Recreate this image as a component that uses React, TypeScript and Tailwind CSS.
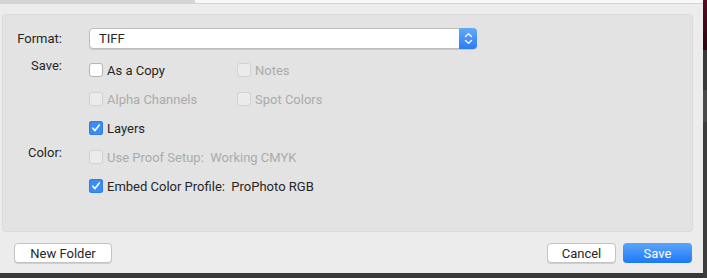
import React from 'react';

type Box = { label: string; checked?: boolean; disabled?: boolean };

function Check({ label, checked, disabled }: Box) {
  return (
    <label className={`flex items-center gap-[4px] whitespace-pre ${disabled ? 'text-[#ababab]' : 'text-[#262626]'}`}>
      {checked ? (
        <span className="flex h-[14px] w-[14px] items-center justify-center rounded-[3px] bg-[#3b8cf6] shadow-[inset_0_0_0_1px_#2f7fe8]">
          <svg width="10" height="10" viewBox="0 0 10 10" fill="none">
            <path d="M1.8 5.2 L4 7.6 L8.3 2" stroke="white" strokeWidth="1.6" strokeLinecap="round" strokeLinejoin="round" />
          </svg>
        </span>
      ) : (
        <span
          className={`h-[14px] w-[14px] rounded-[3px] border ${
            disabled ? 'border-[#d2d2d2] bg-[#ebebeb]' : 'border-[#b3b3b3] bg-white'
          }`}
        />
      )}
      <span>{label}</span>
    </label>
  );
}

export default function App() {
  return (
    <div
      className="flex h-[278px] w-[707px] bg-[#383838] text-[13px] leading-none"
      style={{ fontFamily: 'Roboto, "Liberation Sans", sans-serif' }}
    >
      <div className="flex h-[273px] w-[703px] flex-col bg-[#ececec]">
        {/* top tab strip */}
        <div className="flex h-[3px]">
          <div className="w-[195px] bg-[#d4d4d4]" />
          <div className="flex-1 bg-[#f7f7f7]" />
        </div>
        <div className="h-[1px] bg-[#d3d3d3]" />

        {/* options panel */}
        <div className="ml-[2px] mt-[10px] h-[218px] w-[691px] rounded-[4px] border border-[#dadada] bg-[#e3e3e3] pt-[13px]">
          <div className="flex items-center">
            <div className="w-[59px] text-right text-[#262626]">Format:</div>
            <div className="ml-[27px] flex h-[21px] w-[388px] items-center rounded-[4px] border border-[#bdbdbd] bg-white shadow-[0_1px_0_#c8c8c8]">
              <span className="ml-[9px] flex-1 text-[#262626]">TIFF</span>
              <span className="-mr-px flex h-[21px] w-[18px] items-center justify-center rounded-r-[4px] bg-gradient-to-b from-[#63a8fb] to-[#2b7cf3]">
                <svg width="9" height="13" viewBox="0 0 9 13" fill="none">
                  <path d="M1.5 4.5 L4.5 1.8 L7.5 4.5" stroke="white" strokeWidth="1.3" strokeLinecap="round" strokeLinejoin="round" />
                  <path d="M1.5 8.5 L4.5 11.2 L7.5 8.5" stroke="white" strokeWidth="1.3" strokeLinecap="round" strokeLinejoin="round" />
                </svg>
              </span>
            </div>
          </div>

          <div className="mt-[9px] flex">
            <div className="w-[59px] pt-[1px] text-right text-[#262626]">Save:</div>
            <div className="ml-[27px] grid grid-cols-[148px_160px] gap-y-[15px] pt-[5px]">
              <Check label="As a Copy" />
              <Check label="Notes" disabled />
              <Check label="Alpha Channels" disabled />
              <Check label="Spot Colors" disabled />
              <Check label="Layers" checked />
            </div>
          </div>

          <div className="mt-[10px] flex">
            <div className="w-[59px] pt-[1px] text-right text-[#262626]">Color:</div>
            <div className="ml-[27px] flex flex-col gap-y-[15px] pt-[5px]">
              <Check label="Use Proof Setup:  Working CMYK" disabled />
              <Check label="Embed Color Profile:  ProPhoto RGB" checked />
            </div>
          </div>
        </div>

        {/* footer buttons */}
        <div className="mt-[11px] flex items-center px-[14px] pr-[11px]">
          <button className="h-[20px] w-[98px] rounded-[4px] border border-[#c3c3c3] bg-white text-[#262626] shadow-[0_1px_0_#cfcfcf]">
            New Folder
          </button>
          <div className="flex-1" />
          <button className="h-[20px] w-[69px] rounded-[4px] border border-[#c3c3c3] bg-white text-[#262626] shadow-[0_1px_0_#cfcfcf]">
            Cancel
          </button>
          <button className="ml-[7px] h-[20px] w-[69px] rounded-[4px] bg-gradient-to-b from-[#5aa5fb] to-[#1b78f4] text-white">
            Save
          </button>
        </div>
      </div>

      {/* background app sliver */}
      <div className="flex w-[4px] flex-col">
        <div className="h-[50px] bg-gradient-to-b from-[#5a0b24] to-[#2a0610]" />
        <div className="h-[40px] bg-[#3a3a3a]" />
        <div className="h-[32px] bg-[#4a4a4a]" />
        <div className="flex-1 bg-[#3c3c3c]" />
      </div>
    </div>
  );
}
